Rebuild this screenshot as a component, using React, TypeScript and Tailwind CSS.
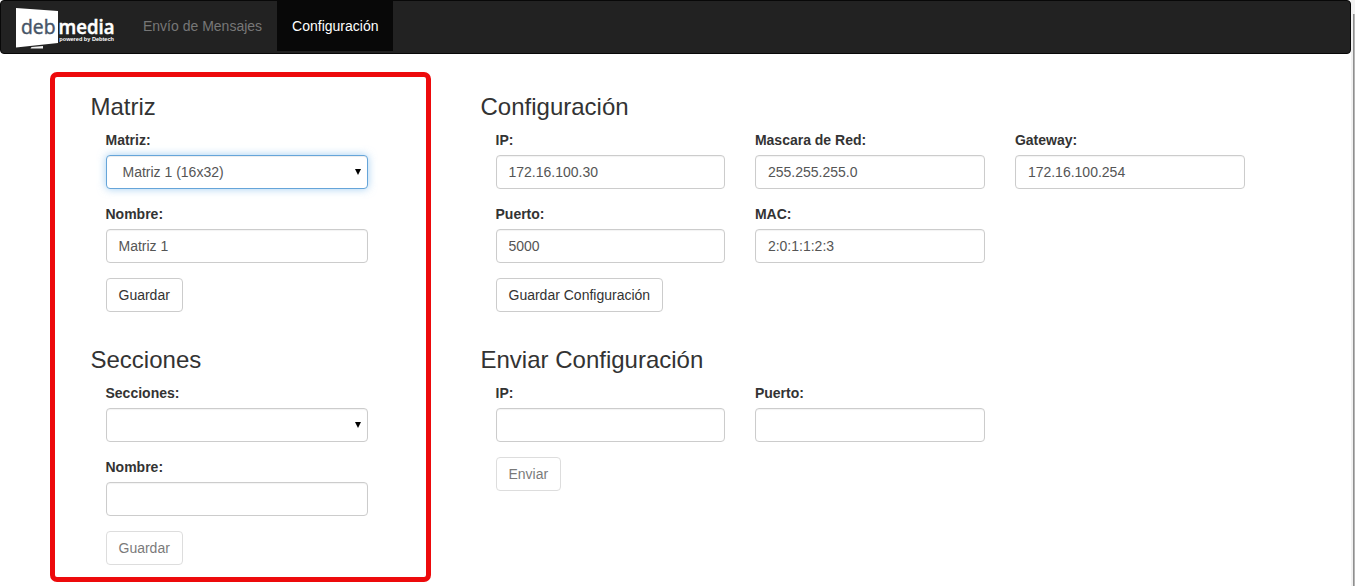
import type { ReactNode } from 'react';

const control =
  'block h-[34px] w-full rounded border bg-white px-[11.5px] text-[14px] leading-[20px] text-[#555] outline-none';

function Field({ label, children, className = '' }: { label: string; children: ReactNode; className?: string }) {
  return (
    <label className={`block ${className}`}>
      <span className="-ml-[0.5px] mb-[5px] block text-[14px] leading-[20px] font-bold">{label}</span>
      {children}
    </label>
  );
}

function TextInput({ value = '' }: { value?: string }) {
  return (
    <input
      type="text"
      defaultValue={value}
      className={`${control} border-[#ccc] shadow-[inset_0_1px_1px_rgba(0,0,0,0.05)]`}
    />
  );
}

function Select({ value = '', active = false }: { value?: string; active?: boolean }) {
  const state = active
    ? 'border-[#66a5d9] shadow-[inset_0_1px_1px_rgba(0,0,0,0.075),0_0_8px_rgba(102,175,233,0.6)]'
    : 'border-[#ccc] shadow-[inset_0_1px_1px_rgba(0,0,0,0.05)]';
  return (
    <span className="relative block">
      <select className={`${control} appearance-none pl-[15.5px]! ${state}`}>
        <option>{value}</option>
      </select>
      <svg className="pointer-events-none absolute top-[14px] right-[7px] h-[6px] w-[6px]" viewBox="0 0 6 6">
        <path d="M0 0h6L3 6z" fill="#000" />
      </svg>
    </span>
  );
}

function Button({ children, disabled = false }: { children: ReactNode; disabled?: boolean }) {
  return (
    <button
      type="button"
      disabled={disabled}
      className="h-[34px] rounded border border-[#ccc] bg-white pr-[12px] pl-[11.5px] text-[14px] leading-[20px] text-[#333] disabled:opacity-65"
    >
      {children}
    </button>
  );
}

function Title({ children }: { children: ReactNode }) {
  return <h3 className="-ml-[0.5px] mb-[10px] h-[26px] text-[24px] leading-[26px]">{children}</h3>;
}

function Logo() {
  return (
    <svg width="104" height="48" viewBox="0 0 104 48" className="mt-[5px] ml-[14px] shrink-0" aria-label="debmedia">
      <path d="M1 2 43 5V37L1 41.5z" fill="#fff" />
      <path d="M16.5 41 28 40v2.5H15.5z" fill="#f2f2f2" />
      <text x="6" y="27.7" textLength="34.5" lengthAdjust="spacingAndGlyphs" fontFamily="'Open Sans', sans-serif" fontSize="20" fill="#465467" stroke="#465467" strokeWidth="0.45">
        deb
      </text>
      <text x="43.5" y="27.7" textLength="56" lengthAdjust="spacingAndGlyphs" fontFamily="'Open Sans', sans-serif" fontSize="19.5" fontWeight="600" fill="#fff" stroke="#fff" strokeWidth="0.5">
        media
      </text>
      <text x="44.3" y="34.8" textLength="54.7" lengthAdjust="spacingAndGlyphs" fontFamily="'Liberation Sans', sans-serif" fontSize="6.2" fontWeight="700" fill="#fff">
        powered by Debtech
      </text>
    </svg>
  );
}

export default function App() {
  return (
    <div className="flex h-[586px] w-[1355px] overflow-hidden bg-white font-['Liberation_Sans',Arial,sans-serif] text-[#333]">
      <div className="w-[1351px] shrink-0">
        <nav className="flex h-[54px] rounded border border-[#080808] bg-[#222] text-[14px] leading-[20px]">
          <Logo />
          <a className="ml-[9px] h-[50px] px-[15px] py-[15px] whitespace-nowrap text-[#777]">Envío de Mensajes</a>
          <a className="h-[50px] bg-[#080808] px-[15px] py-[15px] text-white">Configuración</a>
        </nav>

        <main className="flex pt-[18px] pl-[50px]">
          <section className="h-[510px] w-[381px] rounded-[7px] border-[5px] border-[#ed0a0c] pt-[17px] pl-[36px]">
            <Title>Matriz</Title>
            <div className="ml-[15px] flex w-[262px] flex-col items-start gap-[15px]">
              <Field label="Matriz:" className="w-full">
                <Select value="Matriz 1 (16x32)" active />
              </Field>
              <Field label="Nombre:" className="w-full">
                <TextInput value="Matriz 1" />
              </Field>
              <Button>Guardar</Button>
            </div>
            <div className="mt-[35px]">
              <Title>Secciones</Title>
              <div className="ml-[15px] flex w-[262px] flex-col items-start gap-[15px]">
                <Field label="Secciones:" className="w-full">
                  <Select />
                </Field>
                <Field label="Nombre:" className="w-full">
                  <TextInput />
                </Field>
                <Button disabled>Guardar</Button>
              </div>
            </div>
          </section>

          <section className="ml-[50px] pt-[22px]">
            <Title>Configuración</Title>
            <div className="ml-[15px] grid grid-cols-[229px_229.6px_229.6px] gap-x-[30.4px] gap-y-[15px]">
              <Field label="IP:">
                <TextInput value="172.16.100.30" />
              </Field>
              <Field label="Mascara de Red:">
                <TextInput value="255.255.255.0" />
              </Field>
              <Field label="Gateway:">
                <TextInput value="172.16.100.254" />
              </Field>
              <Field label="Puerto:">
                <TextInput value="5000" />
              </Field>
              <Field label="MAC:">
                <TextInput value="2:0:1:1:2:3" />
              </Field>
              <div className="col-span-3 flex">
                <Button>Guardar Configuración</Button>
              </div>
            </div>
            <div className="mt-[35px]">
              <Title>Enviar Configuración</Title>
              <div className="ml-[15px] grid grid-cols-[229px_229.6px_229.6px] gap-x-[30.4px] gap-y-[15px]">
                <Field label="IP:">
                  <TextInput />
                </Field>
                <Field label="Puerto:">
                  <TextInput />
                </Field>
                <div className="col-span-3 flex">
                  <Button disabled>Enviar</Button>
                </div>
              </div>
            </div>
          </section>
        </main>
      </div>
      <div className="flex w-[4px] bg-[#f1f1f1] pt-[14px]">
        <div className="ml-[2px] w-px bg-[#8f8f8f]" />
        <div className="w-px bg-[#b5b5b5]" />
      </div>
    </div>
  );
}
